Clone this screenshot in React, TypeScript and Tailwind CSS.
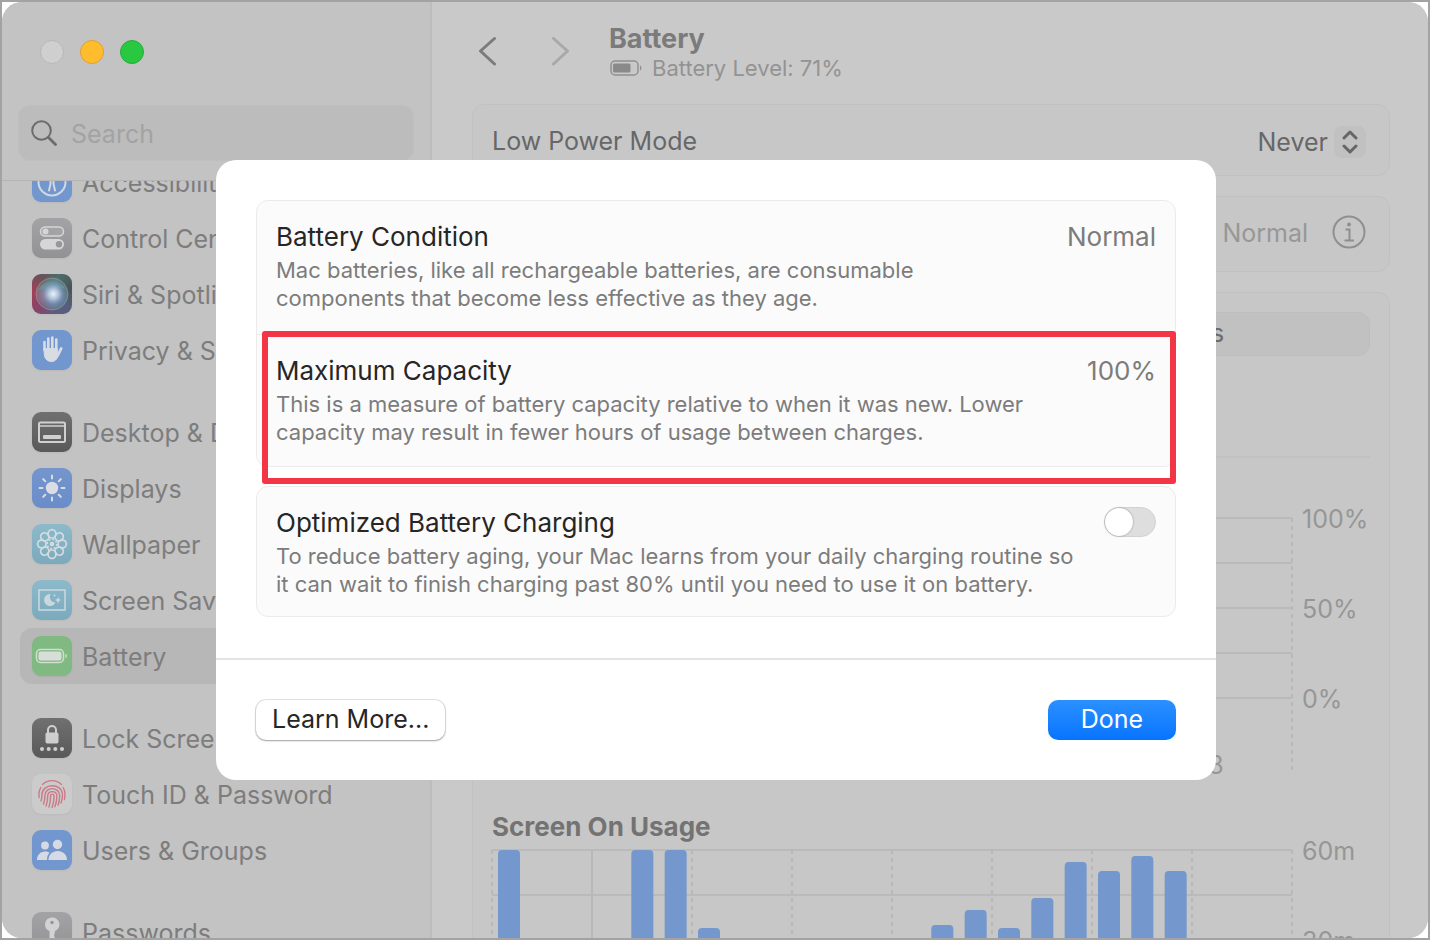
import { useState } from 'react';
import type { ReactNode } from 'react';

type Item = { name: string; tile: string; icon: ReactNode };

const PETALS = [0, 45, 90, 135, 180, 225, 270, 315];
const TICKS = [0, 12.5, 25, 37.5, 50, 62.5, 75, 87.5, 100];
const HOURS = ['21', '00', '03', '06', '09', '12', '15', '18'];

// minutes of screen time per hour slot, 24 slots
const USAGE = [60, 0, 0, 0, 60, 60, 34, 0, 0, 0, 0, 0, 0, 35, 40, 34, 44, 56, 53, 58, 53, 0, 0, 0];

const groups: Item[][] = [
  [
    {
      name: 'Accessibility',
      tile: 'bg-[#7297cf]',
      icon: (
        <g fill="none" stroke="#d3d8e0" strokeWidth="2" strokeLinecap="round">
          <circle cx="20" cy="20" r="13.5" />
          <circle cx="20" cy="12.5" r="1.5" fill="#d3d8e0" stroke="none" />
          <path d="M13 16.5l5 1.5h4l5-1.5M18.5 18v4L17 28.5M21.5 18v4l1.5 6.500" />
        </g>
      ),
    },
    {
      name: 'Control Center',
      tile: 'bg-gradient-to-b from-[#a3a3a6] to-[#929295]',
      icon: (
        <g>
          <rect x="8.500" y="9" width="23" height="9" rx="4.500" fill="#a3a3a6" stroke="#d6d6d7" strokeWidth="1.500" />
          <circle cx="13.500" cy="13.500" r="3" fill="#d6d6d7" />
          <rect x="8" y="21" width="24" height="10.500" rx="5.250" fill="#d6d6d7" />
          <circle cx="27" cy="26.250" r="3.200" fill="#98989b" />
        </g>
      ),
    },
    {
      name: 'Siri & Spotlight',
      tile: 'bg-[conic-gradient(from_20deg,#4c6e6a,#4a5258,#54607c,#5f5a80,#8a4268,#a34058,#6a5258,#4c6e6a)]',
      icon: (
        <g>
          <defs>
            <radialGradient id="siri" cx="0.54" cy="0.5" r="0.5">
              <stop offset="0" stopColor="#eef2f5" />
              <stop offset="0.3" stopColor="#b3c6de" />
              <stop offset="0.65" stopColor="#7697ba" stopOpacity="0.7" />
              <stop offset="1" stopColor="#6f9a98" stopOpacity="0.35" />
            </radialGradient>
          </defs>
          <path d="M5 17c4-9 20-14 29-2-9-3-15 0-16 3-5-3-9-3-13-1z" fill="#58a08c" opacity="0.65" />
          <path d="M5 17c5-2 9-1 14 3-3 4-8 8-11 9-3-4-4-8-3-12z" fill="#a84c78" opacity="0.5" />
          <circle cx="20" cy="20" r="16" fill="url(#siri)" />
          <circle cx="20" cy="20" r="16" fill="none" stroke="#9cb4b4" strokeOpacity="0.5" />
        </g>
      ),
    },
    {
      name: 'Privacy & Security',
      tile: 'bg-[#7297cf]',
      icon: (
        <g stroke="#d8dce3" fill="#d8dce3" strokeLinecap="round" strokeLinejoin="round">
          <path d="M12.500 20V12M16.300 19V8.500M20.300 19V7.500M24.300 19V9.500" strokeWidth="2.600" fill="none" />
          <path d="M29.200 18.500L26 25" strokeWidth="2.800" fill="none" />
          <path d="M12.200 18.500h13.200v6l1.600-2.200c-.8 6-3.300 9.200-7.500 9.200-4.800 0-7.300-3.500-7.300-8.500z" strokeWidth="1" />
        </g>
      ),
    },
  ],
  [
    {
      name: 'Desktop & Dock',
      tile: 'bg-gradient-to-b from-[#707070] to-[#595959]',
      icon: (
        <g>
          <rect x="7" y="10.500" width="26" height="19.500" rx="1.500" fill="none" stroke="#d0d0d0" strokeWidth="2" />
          <path d="M7 14h26" stroke="#d0d0d0" strokeWidth="1.500" />
          <rect x="11" y="23" width="18" height="4" rx="1" fill="#d0d0d0" />
        </g>
      ),
    },
    {
      name: 'Displays',
      tile: 'bg-gradient-to-b from-[#7496cd] to-[#6a8cc9]',
      icon: (
        <g>
          <circle cx="20" cy="20" r="6.200" fill="#dadde3" />
          {PETALS.map((a) => (
            <path key={a} d="M20 10.500V7.500" transform={`rotate(${a} 20 20)`} stroke="#dadde3" strokeWidth="2" strokeLinecap="round" />
          ))}
        </g>
      ),
    },
    {
      name: 'Wallpaper',
      tile: 'bg-gradient-to-b from-[#8cbacb] to-[#7caabd]',
      icon: (
        <g fill="none" stroke="#d3dde1" strokeWidth="1.700">
          {PETALS.map((a) => (
            <ellipse key={a} cx="20" cy="9.800" rx="3.900" ry="4.200" transform={`rotate(${a} 20 20)`} />
          ))}
          <circle cx="20" cy="20" r="2.300" fill="#d3dde1" stroke="none" />
          <circle cx="20" cy="20" r="4.800" strokeDasharray="2 1.700" />
        </g>
      ),
    },
    {
      name: 'Screen Saver',
      tile: 'bg-gradient-to-b from-[#8cbacb] to-[#7caabd]',
      icon: (
        <g>
          <rect x="7" y="10" width="26" height="20" fill="none" stroke="#c9d8de" strokeWidth="1.600" />
          <path d="M18.500 14a6 6 0 1 0 5 8.500 5.800 5.800 0 0 1-5-8.500z" fill="#c9d8de" />
          <path d="M26 17l1 2 2 1-2 1-1 2.500-1-2.500-2-1 2-1z" fill="#c9d8de" />
          <circle cx="22.500" cy="15.500" r="1" fill="#c9d8de" />
        </g>
      ),
    },
    {
      name: 'Battery',
      tile: 'bg-[#81b983]',
      icon: (
        <g>
          <rect x="4.500" y="13.500" width="27" height="13" rx="4" fill="none" stroke="#cfe0cf" strokeWidth="1.500" />
          <rect x="6.500" y="15.500" width="23" height="9" rx="2.200" fill="#d8dfd8" />
          <path d="M33.500 17.800c1.900.5 1.900 3.900 0 4.400z" fill="#cfe0cf" />
        </g>
      ),
    },
  ],
  [
    {
      name: 'Lock Screen',
      tile: 'bg-gradient-to-b from-[#707070] to-[#595959]',
      icon: (
        <g fill="#cfcfcf">
          <rect x="13.500" y="14.500" width="13" height="11" rx="1.800" />
          <path d="M16 15v-3a4 4 0 0 1 8 0v3" fill="none" stroke="#cfcfcf" strokeWidth="2" />
          <circle cx="10" cy="31" r="2" />
          <circle cx="16.700" cy="31" r="2" />
          <circle cx="23.300" cy="31" r="2" />
          <circle cx="30" cy="31" r="2" />
        </g>
      ),
    },
    {
      name: 'Touch ID & Password',
      tile: 'bg-[#cbcbcb]',
      icon: (
        <g fill="none" stroke="#cb7a87" strokeWidth="1.400" strokeLinecap="round">
          <path d="M10.500 10.500a13.500 13.500 0 0 1 19 0M7.200 23.500c-.8-4 0-7.200 1.600-10M31.200 13.500c2 3.500 2.200 7.500 1.200 12" />
          <path d="M9 27c.8-2 1-4 1-6.500C10 9.500 30 8 30.500 21c0 3-.5 5.500-1.500 8" />
          <path d="M11.500 30c1.200-3 1.400-5.500 1.400-8.500 0-9 14.600-9.500 14.800.3 0 4-.7 6.700-1.700 9.400" />
          <path d="M14 32c1.400-3.500 1.700-6.500 1.700-10.300 0-5.500 9-5.500 9.200.3 0 4.500-.8 7.700-2 10.700" />
          <path d="M17 33c1.200-3.500 1.600-7 1.600-11.200 0-2.200 3.500-2.200 3.500.2 0 4.500-.8 8-2 11.500" />
        </g>
      ),
    },
    {
      name: 'Users & Groups',
      tile: 'bg-[#7297cf]',
      icon: (
        <g fill="#d6dae2">
          <circle cx="13" cy="15.500" r="3.900" />
          <path d="M5 30c0-5 3.500-8.500 8-8.500 1.800 0 3.200.4 4.500 1.300-1.700 1.700-2.500 4-2.500 7.200z" />
          <circle cx="25.500" cy="14.500" r="4.700" />
          <path d="M16.500 30c0-5.500 4-9 9.200-9 5.300 0 9.300 3.500 9.300 9z" />
        </g>
      ),
    },
  ],
  [
    {
      name: 'Passwords',
      tile: 'bg-gradient-to-b from-[#a3a3a6] to-[#929295]',
      icon: (
        <g>
          <path d="M20 5.500a7 7 0 0 0-2.500 13.500V32l2.500 3 3.500-3.500-2-2.500 2-2.500-1.500-2.500 1-5A7 7 0 0 0 20 5.500z" fill="#d2d2d3" />
          <circle cx="20" cy="10.500" r="1.800" fill="#98989b" />
        </g>
      ),
    },
  ],
];

function Sidebar() {
  return (
    <aside className="flex w-[430px] shrink-0 flex-col overflow-hidden border-r-2 border-[#bdbdbd] bg-[#c3c3c3]">
      <div className="shrink-0 border-b border-[#b5b5b5] px-4 pb-[19px] pt-[38px]">
        <div className="flex gap-4 pl-[22px]">
          <button aria-label="Close" className="size-6 rounded-full border border-[#b7b7b7] bg-[#cfcfcf]" />
          <button aria-label="Minimize" className="size-6 rounded-full border border-[#dfa033] bg-[#ffbd2e]" />
          <button aria-label="Zoom" className="size-6 rounded-full border border-[#24ad37] bg-[#28c840]" />
        </div>
        <label className="mt-[41px] flex h-14 items-center gap-[14px] rounded-xl border border-[#bfbfbf] bg-[#bcbcbc] pl-3">
          <svg viewBox="0 0 26 26" className="size-[26px]" fill="none" stroke="#6c6c6c" strokeLinecap="round">
            <circle cx="10.500" cy="10.500" r="9.300" strokeWidth="2" />
            <path d="M17.500 17.500l7 7" strokeWidth="2.800" />
          </svg>
          <input
            type="search"
            aria-label="Search"
            placeholder="Search"
            className="min-w-0 flex-1 bg-transparent pt-1 text-[25px] outline-none placeholder:text-[#a3a3a3]"
          />
        </label>
      </div>
      <nav className="min-h-0 flex-1 overflow-hidden pl-[18px] pr-4">
        <div className="-mt-[27px] flex flex-col gap-[26px]">
          {groups.map((group, i) => (
            <ul key={i}>
              {group.map((item) => (
                <li key={item.name}>
                  <a
                    href="#"
                    className={`flex h-14 items-center gap-[10px] rounded-xl pl-3 text-[25px] text-[#7d7d7d] ${
                      item.name === 'Battery' ? 'bg-[#b7b7b7]' : ''
                    }`}
                  >
                    <span className={`size-10 shrink-0 overflow-hidden rounded-[9px] shadow-xs ${item.tile}`}>
                      <svg viewBox="0 0 40 40" className="size-10">{item.icon}</svg>
                    </span>
                    <span className="whitespace-nowrap pt-1">{item.name}</span>
                  </a>
                </li>
              ))}
            </ul>
          ))}
        </div>
      </nav>
    </aside>
  );
}

function Grid({ step, height }: { step: number; height: number }) {
  const rows = [];
  for (let y = 1; y <= 181; y += step) rows.push(y);
  return (
    <g strokeWidth="2">
      {rows.map((y) => (
        <line key={y} x1="0" x2="100%" y1={y} y2={y} stroke="#bababa" />
      ))}
      {TICKS.map((x, i) => (
        <line
          key={x}
          x1={`${x}%`}
          x2={`${x}%`}
          y1="1"
          y2={height}
          stroke="#b8b8b8"
          strokeDasharray={i === 1 ? undefined : '4 4'}
        />
      ))}
    </g>
  );
}

function AxisLabels({ labels }: { labels: string[] }) {
  return (
    <div className="-mt-[12px] flex w-[78px] shrink-0 flex-col gap-[62px] pl-[10px] text-[25px] leading-7 text-[#969696]">
      {labels.map((l) => (
        <span key={l}>{l}</span>
      ))}
    </div>
  );
}

const card = 'rounded-xl border border-[#c1c1c1] bg-[#c7c7c7] px-[19px]';

function BatteryPane() {
  return (
    <main className="flex min-w-0 flex-1 flex-col overflow-hidden bg-[#c9c9c9] pl-10 pr-[38px]">
      <header className="flex h-[102px] shrink-0 items-center gap-[38px]">
        <div className="flex gap-[50px] pb-1 pl-[5px]">
          <button aria-label="Back">
            <svg viewBox="0 0 22 30" className="h-[30px] w-[22px]" fill="none" stroke="#7b7b7b" strokeWidth="3" strokeLinecap="round" strokeLinejoin="round">
              <path d="M17.500 2.500L3.500 15l14 13" />
            </svg>
          </button>
          <button aria-label="Forward">
            <svg viewBox="0 0 22 30" className="h-[30px] w-[22px]" fill="none" stroke="#a8a8a8" strokeWidth="3" strokeLinecap="round" strokeLinejoin="round">
              <path d="M4.500 2.500L18.500 15l-14 13" />
            </svg>
          </button>
        </div>
        <div>
          <h1 className="text-[27px] font-bold leading-[30px] text-[#7b7b7b]">Battery</h1>
          <p className="flex items-center gap-[10px] text-[22px] leading-7 text-[#939393]">
            <svg viewBox="0 0 32 16" className="ml-px h-4 w-8">
              <rect x="1" y="1" width="27" height="14" rx="4" fill="none" stroke="#909090" strokeWidth="1.500" />
              <rect x="3" y="3.500" width="17.500" height="9" rx="1.500" fill="#8a8a8a" />
              <path d="M30 5.500c1.900.8 1.900 4.200 0 5z" fill="#909090" />
            </svg>
            Battery Level: 71%
          </p>
        </div>
      </header>

      <section className={`flex h-[72px] shrink-0 items-center justify-between pt-1 text-[25px] text-[#676767] ${card}`}>
        <label htmlFor="low-power">Low Power Mode</label>
        <div className="relative mr-1 flex">
          <select id="low-power" className="h-8 appearance-none bg-transparent pr-[38px] text-right leading-8 outline-none">
            <option>Never</option>
            <option>Always</option>
          </select>
          <span className="pointer-events-none absolute right-0 top-0 grid size-8 place-items-center rounded-lg bg-[#c1c1c1]">
            <svg viewBox="0 0 16 24" className="h-6 w-4" fill="none" stroke="#666" strokeWidth="3" strokeLinecap="round" strokeLinejoin="round">
              <path d="M2 8l6-6 6 6M2 16l6 6 6-6" />
            </svg>
          </span>
        </div>
      </section>

      <section className={`mt-5 flex h-[76px] shrink-0 items-center justify-between text-[25px] text-[#676767] ${card}`}>
        <span>Battery Health</span>
        <span className="mr-1 flex items-center gap-6 text-[#979797]">
          Normal
          <button aria-label="Battery health details" className="pb-1">
            <svg viewBox="0 0 34 34" className="size-[34px]" fill="none" stroke="#8f8f8f" strokeWidth="2">
              <circle cx="17" cy="17" r="15.500" />
              <circle cx="17" cy="9.500" r="1.900" fill="#8f8f8f" stroke="none" />
              <path d="M13.500 14.500h4v11M12.500 25.500h9.500" />
            </svg>
          </button>
        </span>
      </section>

      <section className={`mt-5 shrink-0 py-[19px] ${card}`}>
        <div className="grid h-11 grid-cols-2 rounded-xl border border-[#bdbdbd] bg-[#c1c1c1] text-[25px] text-[#6b6b6b]">
          <button className="rounded-xl bg-[#cbcbcb]">Last 24 Hours</button>
          <button>Last 10 Days</button>
        </div>
        <hr className="mt-[100px] border-t-2 border-[#c1c1c1]" />

        <h2 className="mt-4 text-[26px] font-bold leading-8 text-[#737373]">Battery Level</h2>
        <div className="mt-[11px] flex">
          <div className="min-w-0 flex-1">
            <svg className="h-[234px] w-full overflow-visible">
              <Grid step={45} height={256} />
            </svg>
            <div className="grid grid-cols-8 text-[25px] leading-7 text-[#969696]">
              {HOURS.map((h) => (
                <span key={h} className="pl-[6px]">{h}</span>
              ))}
            </div>
          </div>
          <AxisLabels labels={['100%', '50%', '0%']} />
        </div>

        <h2 className="mt-8 text-[26px] font-bold leading-8 text-[#737373]">Screen On Usage</h2>
        <div className="mt-[6px] flex">
          <svg className="h-[232px] min-w-0 flex-1 overflow-visible">
            <Grid step={45} height={232} />
            {USAGE.map((m, i) => (
              <rect
                key={i}
                x={`${(i / 24) * 100 + 0.75}%`}
                y={181 - m * 3}
                width="2.750%"
                height={m * 3}
                rx="4"
                fill="#7497cd"
              />
            ))}
          </svg>
          <AxisLabels labels={['60m', '30m', '0m']} />
        </div>
      </section>
    </main>
  );
}

function Row({ title, text, children }: { title: ReactNode; text: string; children: ReactNode }) {
  return (
    <div className="flex items-start justify-between gap-6">
      <div>
        <div className="text-[26px] leading-8 text-[#262626]">{title}</div>
        <p className="mt-[3px] max-w-[820px] whitespace-pre-line text-[22px] leading-7 text-[#7c7c7c]">{text}</p>
      </div>
      {children}
    </div>
  );
}

function HealthDialog() {
  const [optimized, setOptimized] = useState(false);

  return (
    <div className="fixed inset-0 grid place-items-center pl-[2px]">
      <div role="dialog" aria-label="Battery Health" className="w-full max-w-[1000px] rounded-[20px] bg-white">
        <div className="flex flex-col gap-[19px] px-10 pb-[41px] pt-10">
          <div className="rounded-xl border border-[#ebebeb] bg-[#fbfbfb]">
            <div className="px-[19px] pb-[22px] pt-5">
              <Row
                title="Battery Condition"
                text={'Mac batteries, like all rechargeable batteries, are consumable\ncomponents that become less effective as they age.'}
              >
                <span className="text-[26px] leading-8 text-[#7c7c7c]">Normal</span>
              </Row>
            </div>
            <div className="relative border-t border-[#ebebeb] px-[19px] py-5">
              <Row
                title="Maximum Capacity"
                text={'This is a measure of battery capacity relative to when it was new. Lower\ncapacity may result in fewer hours of usage between charges.'}
              >
                <span className="text-[26px] leading-8 text-[#7c7c7c]">100%</span>
              </Row>
              {/* highlight */}
              <div className="pointer-events-none absolute -bottom-[18px] -right-px -top-1 left-[5px] rounded-[3px] border-[6px] border-[#f23645]" />
            </div>
          </div>

          <div className="rounded-xl border border-[#ebebeb] bg-[#fbfbfb] px-[19px] pb-[18px] pt-5">
            <Row
              title={<label htmlFor="optimized">Optimized Battery Charging</label>}
              text={'To reduce battery aging, your Mac learns from your daily charging routine so\nit can wait to finish charging past 80% until you need to use it on battery.'}
            >
              <input
                id="optimized"
                type="checkbox"
                role="switch"
                checked={optimized}
                onChange={(e) => setOptimized(e.target.checked)}
                className="h-[30px] w-[52px] shrink-0 appearance-none rounded-full border border-[#d2d2d2] bg-[#dedede] before:block before:size-7 before:rounded-full before:bg-white before:shadow-[0_0_2px_rgba(0,0,0,0.4)] checked:bg-[#0a7aff] checked:before:translate-x-[22px]"
              />
            </Row>
          </div>
        </div>

        <div className="flex items-center justify-between border-t-2 border-[#e4e4e4] px-10 py-10">
          <button className="h-10 rounded-[10px] bg-white px-4 pb-[2px] text-[25px] leading-[38px] text-[#262626] shadow-[0_0_0_1px_rgba(0,0,0,0.1),0_1px_2px_rgba(0,0,0,0.3)]">
            Learn More...
          </button>
          <button className="h-10 w-32 rounded-[10px] bg-gradient-to-b from-[#2a90ff] to-[#0574ff] pb-[2px] text-[25px] leading-[38px] text-white">
            Done
          </button>
        </div>
      </div>
    </div>
  );
}

export default function App() {
  return (
    <div className="h-screen border-2 border-[#a3a3a3] bg-white font-['Inter',sans-serif]">
      <div className="flex h-full overflow-hidden rounded-[20px] bg-[#c9c9c9]">
        <Sidebar />
        <BatteryPane />
      </div>
      <HealthDialog />
    </div>
  );
}
